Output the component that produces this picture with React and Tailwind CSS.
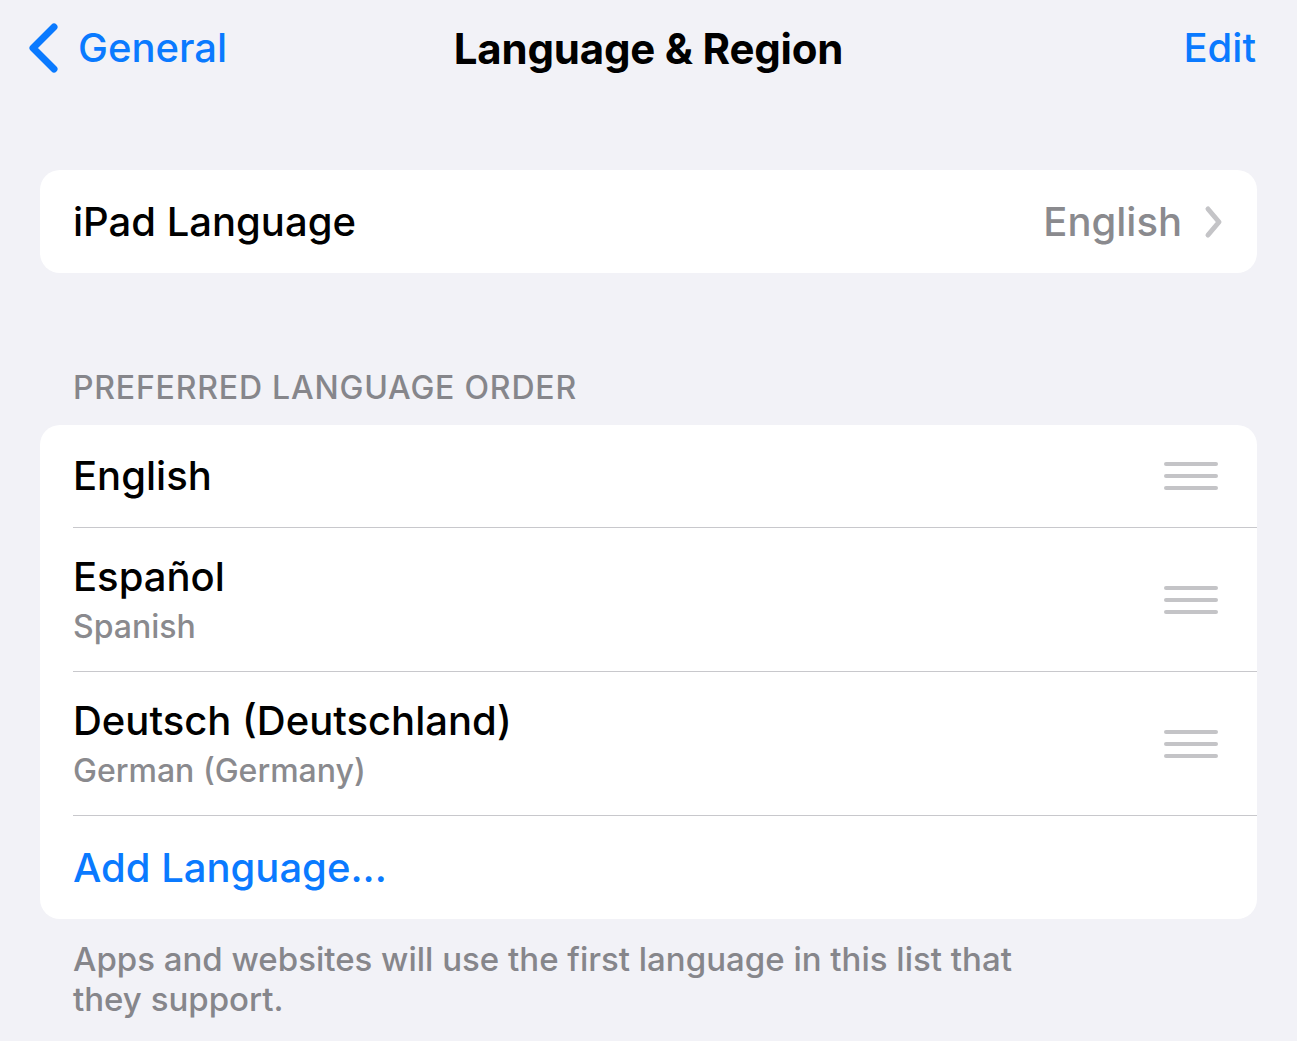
import React from "react";

const font = { fontFamily: "Inter, 'Noto Sans', sans-serif" };

function Handle() {
  return (
    <div className="flex flex-col gap-[8px] w-[54px]">
      <div className="h-[4px] rounded-full bg-[#c4c4c7]" />
      <div className="h-[4px] rounded-full bg-[#c4c4c7]" />
      <div className="h-[4px] rounded-full bg-[#c4c4c7]" />
    </div>
  );
}

function LangRow({ title, sub, last }) {
  return (
    <div className="pl-[33px]">
      <div className={`flex items-center pr-[39px] ${sub ? "h-[144px]" : "h-[103px]"} ${last ? "" : "border-b border-[#c8c8cc]"}`}>
        <div className="flex-1">
          <div className="text-[40px] leading-[48px] font-medium text-black">{title}</div>
          {sub && <div className="text-[32px] leading-[40px] font-medium text-[#8a8a8e] mt-[6px]">{sub}</div>}
        </div>
        <Handle />
      </div>
    </div>
  );
}

export default function App() {
  return (
    <div className="w-[1297px] h-[1041px] bg-[#f2f2f7] overflow-hidden" style={font}>
      <div className="relative h-[96px] flex items-center justify-between px-[26px]">
        <div className="flex items-center gap-[18px] text-[#0a7aff]">
          <svg width="34" height="52" viewBox="0 0 34 52" fill="none">
            <path d="M28 5 L7 26 L28 47" stroke="#0a7aff" strokeWidth="7" strokeLinecap="round" strokeLinejoin="round" />
          </svg>
          <span className="text-[40px] font-medium leading-none">General</span>
        </div>
        <div className="absolute left-0 right-0 text-center text-[42px] font-bold text-black pointer-events-none tracking-[-0.2px]">
          Language &amp; Region
        </div>
        <span className="text-[40px] font-medium text-[#0a7aff] pr-[15px]">Edit</span>
      </div>

      <div className="px-[40px] pt-[74px]">
        <div className="bg-white rounded-[20px] h-[103px] flex items-center pl-[33px] pr-[33px]">
          <span className="flex-1 text-[40px] font-medium text-black">iPad Language</span>
          <span className="text-[40px] font-medium text-[#8a8a8e]">English</span>
          <svg className="ml-[22px]" width="20" height="34" viewBox="0 0 20 34" fill="none">
            <path d="M4 4 L15 17 L4 30" stroke="#c4c4c7" strokeWidth="5" strokeLinecap="round" strokeLinejoin="round" />
          </svg>
        </div>

        <div className="pl-[33px] pt-[95px] pb-[17px] text-[32px] leading-[40px] font-medium tracking-[0.8px] text-[#86868b]">
          PREFERRED LANGUAGE ORDER
        </div>

        <div className="bg-white rounded-[20px] overflow-hidden">
          <LangRow title="English" />
          <LangRow title="Español" sub="Spanish" />
          <LangRow title="Deutsch (Deutschland)" sub="German (Germany)" />
          <div className="pl-[33px] h-[103px] flex items-center text-[40px] font-medium text-[#0a7aff]">
            Add Language...
          </div>
        </div>

        <div className="pl-[33px] pt-[20px] text-[33px] leading-[40px] font-medium text-[#86868b] w-[1020px]">
          Apps and websites will use the first language in this list that they support.
        </div>
      </div>
    </div>
  );
}
